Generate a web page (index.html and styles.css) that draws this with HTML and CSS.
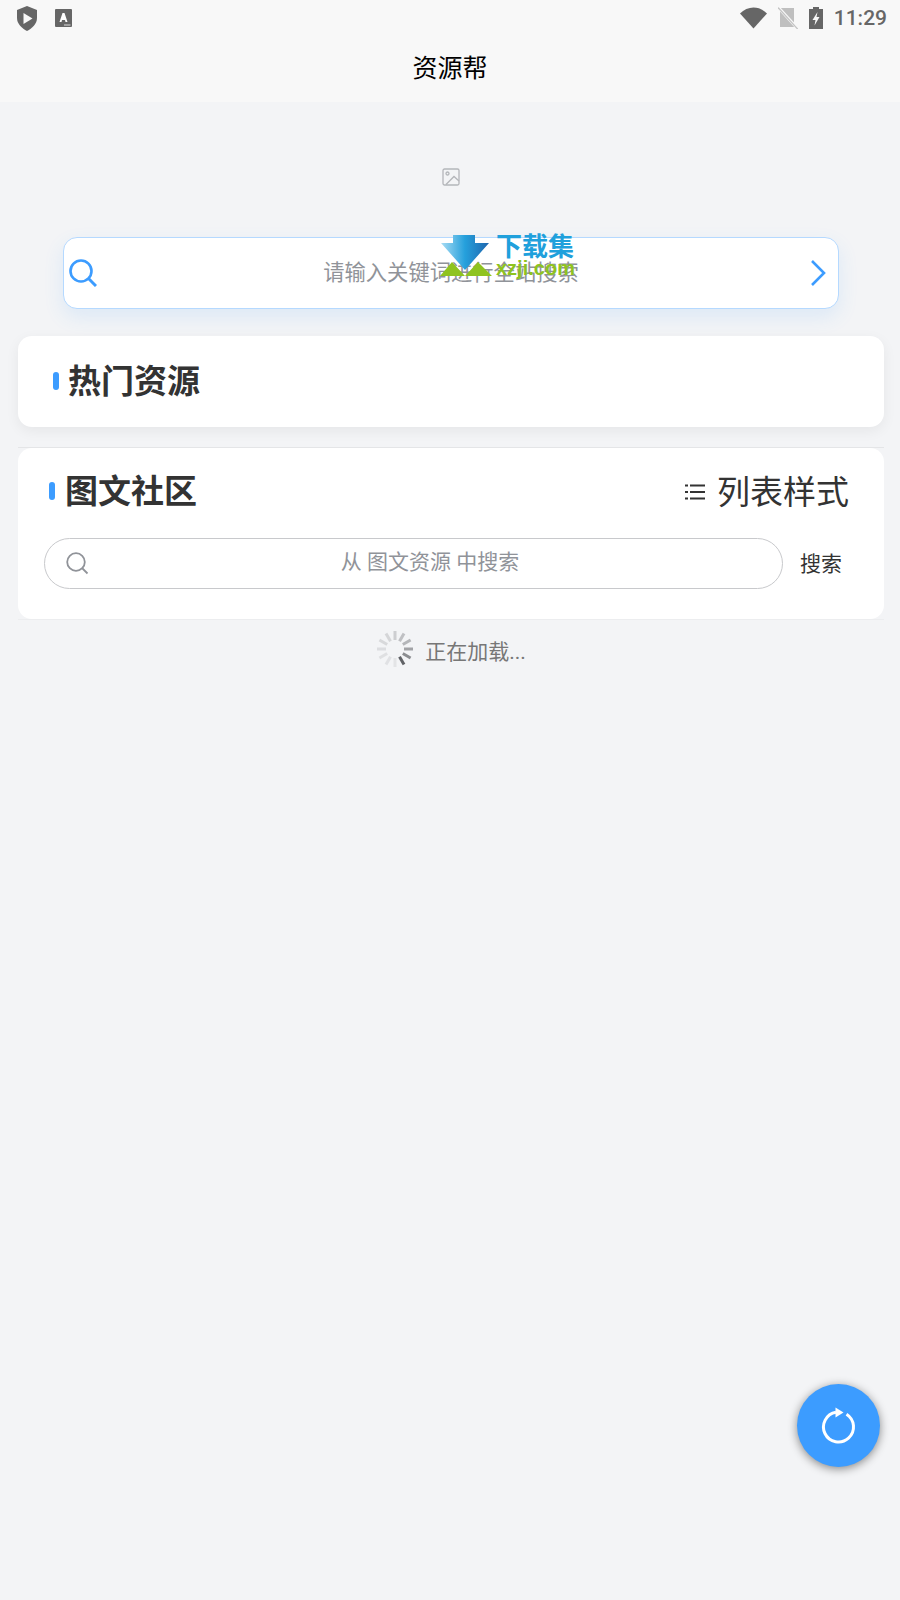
FILE: index.html
```html
<!DOCTYPE html>
<html lang="zh-CN">
  <head>
    <meta charset="UTF-8" />
    <meta name="viewport" content="width=device-width, initial-scale=1.0" />
    <title>资源帮</title>
    <link rel="stylesheet" href="styles.css">
  </head>
  <body>
    <header class="top">
      <div class="status">
        <div class="status-left">
          <svg width="22" height="25" viewBox="0 0 22 25">
            <path d="M11 0 L21 4 V12 C21 18 16 22.500 11 25 C6 22.500 1 18 1 12 V4 Z" fill="#666" />
            <path d="M7.500 7 L16.500 12.500 L7.500 18 Z" fill="#f8f8f8" />
          </svg>
          <svg width="17" height="19" viewBox="0 0 17 19">
            <rect width="17" height="18" rx="1" fill="#666" />
            <path d="M4.500 13 L7.500 4 H9.500 L12.500 13 H10.500 L10 11 H7 L6.500 13 Z" fill="#fff" />
            <path d="M9 15.500 H15.500 V16.500 H9 Z" fill="#ddd" />
          </svg>
        </div>
        <div class="status-right">
          <svg width="27" height="22" viewBox="0 0 27 22">
            <path d="M0 6.500 C7.500 -1.500 19.500 -1.500 27 6.500 L13.500 21.500 Z" fill="#666" />
          </svg>
          <svg width="20" height="22" viewBox="0 0 20 22">
            <path d="M2 1 H16 V20 H2 Z" fill="#bfbfbf" />
            <path d="M0 0 L20 22" stroke="#f8f8f8" stroke-width="3" />
            <path d="M0 0.500 L20 22.500" stroke="#c4c4c4" stroke-width="1.200" />
          </svg>
          <svg width="14" height="22" viewBox="0 0 14 22">
            <path d="M4 0 H10 V2 H14 V22 H0 V2 H4 Z" fill="#666" />
            <path d="M8.500 5 L3.500 13 H6.500 L5.500 18.500 L10.500 10 H7.500 Z" fill="#f8f8f8" />
          </svg>
          <span class="time">11:29</span>
        </div>
      </div>
      <div class="nav-title">资源帮</div>
    </header>

    <main>
      <div class="banner">
        <svg width="18" height="18" viewBox="0 0 18 18" fill="none" stroke="#b4b6ba" stroke-width="1.300">
          <rect x="1" y="1" width="16" height="16" rx="1.500" />
          <circle cx="5.500" cy="5.500" r="1.500" />
          <path d="M4 16.500 L12 8.500 L17 13" />
        </svg>
      </div>

      <div class="site-search">
        <svg width="28" height="28" viewBox="0 0 28 28" fill="none" stroke="#3c9cff" stroke-width="2.600">
          <circle cx="12" cy="12" r="10.500" />
          <path d="M19.500 19.500 L27 27" stroke-width="3" />
        </svg>
        <span class="site-search-text">请输入关键词进行全站搜索</span>
        <svg width="16" height="28" viewBox="0 0 16 28" fill="none" stroke="#3c9cff" stroke-width="2.600">
          <path d="M2 2 L14 14 L2 26" />
        </svg>
      </div>

      <section class="card card-hot">
        <h2 class="card-title">热门资源</h2>
      </section>

      <section class="posts-wrap">
        <div class="card card-posts">
          <div class="posts-head">
            <h2 class="card-title">图文社区</h2>
            <div class="list-style">
              <svg width="20" height="16" viewBox="0 0 20 16" fill="#333">
                <rect x="0" y="0.500" width="3" height="2" />
                <rect x="5" y="0.500" width="15" height="2" />
                <rect x="0" y="7" width="3" height="2" />
                <rect x="5" y="7" width="15" height="2" />
                <rect x="0" y="13.500" width="3" height="2" />
                <rect x="5" y="13.500" width="15" height="2" />
              </svg>
              <span>列表样式</span>
            </div>
          </div>
          <div class="posts-search">
            <div class="search-input">
              <svg width="23" height="23" viewBox="0 0 23 23" fill="none" stroke="#909399" stroke-width="1.800">
                <circle cx="10" cy="10" r="8.800" />
                <path d="M16 16 L21.500 21.500" />
              </svg>
              <span class="search-hint">从 图文资源 中搜索</span>
            </div>
            <span class="search-btn">搜索</span>
          </div>
        </div>
      </section>

      <div class="loading">
        <svg width="38" height="38" viewBox="-19 -19 38 38" stroke="#606266" stroke-width="3">
          <line y1="-18" y2="-9" transform="rotate(0)" opacity="0.250" />
          <line y1="-18" y2="-9" transform="rotate(30)" opacity="0.350" />
          <line y1="-18" y2="-9" transform="rotate(60)" opacity="0.420" />
          <line y1="-18" y2="-9" transform="rotate(90)" opacity="0.550" />
          <line y1="-18" y2="-9" transform="rotate(120)" opacity="0.700" />
          <line y1="-18" y2="-9" transform="rotate(150)" opacity="1" />
          <line y1="-18" y2="-9" transform="rotate(180)" opacity="0.100" />
          <line y1="-18" y2="-9" transform="rotate(210)" opacity="0.120" />
          <line y1="-18" y2="-9" transform="rotate(240)" opacity="0.130" />
          <line y1="-18" y2="-9" transform="rotate(270)" opacity="0.150" />
          <line y1="-18" y2="-9" transform="rotate(300)" opacity="0.180" />
          <line y1="-18" y2="-9" transform="rotate(330)" opacity="0.200" />
        </svg>
        <span class="loading-text">正在加载...</span>
      </div>
    </main>

    <!-- watermark over the search box -->
    <div class="watermark">
      <svg width="54" height="44" viewBox="0 0 54 44">
        <defs>
          <linearGradient id="arrowFill" x1="0" y1="0" x2="1" y2="0">
            <stop offset="0" stop-color="#a8dcf4" />
            <stop offset="0.500" stop-color="#25a0dc" />
            <stop offset="1" stop-color="#1f66ae" />
          </linearGradient>
        </defs>
        <path d="M13 0 H35 V8 H49 L25 35 L1 8 H13 Z" fill="url(#arrowFill)" />
        <path d="M0 41 L12 27 L25 41 Z M25 41 L38 27 L52 41 Z" fill="#8fc31f" />
      </svg>
      <div class="watermark-text">
        <div class="watermark-cn">下载集</div>
        <div class="watermark-en">xzji.com</div>
      </div>
    </div>

    <button class="fab" type="button">
      <svg width="38" height="40" viewBox="0 0 38 40" fill="none" stroke="#fff" stroke-width="3">
        <path d="M26.500 8.300 A15 15 0 1 1 16 6.200" />
        <path d="M15.500 1.500 L23.500 6.500 L15.500 11.500 Z" fill="#fff" stroke="none" />
      </svg>
    </button>
  </body>
</html>
```

FILE: styles.css
```css
body {
  font-family: Roboto, "Noto Sans CJK SC", sans-serif;
  background-color: #f3f4f6;
  margin: 0;
  padding: 0;
  height: 1600px;
  overflow: hidden;
}

.top {
  background-color: #f8f8f8;
  height: 102px;
}

.status {
  height: 36px;
  display: flex;
  justify-content: space-between;
  align-items: center;
  padding: 0 13px 0 16px;
}

.status-left {
  display: flex;
  align-items: center;
  gap: 17px;
}

.status-right {
  display: flex;
  align-items: center;
  gap: 11px;
}

.time {
  color: #666;
  font-size: 21px;
  font-weight: 500;
}

.nav-title {
  text-align: center;
  font-size: 25px;
  line-height: 30px;
  color: #000;
  margin-top: 18px;
}

.banner {
  height: 135px;
  display: flex;
  justify-content: center;
  align-items: center;
  padding-left: 2px;
  padding-top: 14px;
  box-sizing: border-box;
}

.site-search {
  display: flex;
  align-items: center;
  justify-content: space-between;
  height: 72px;
  margin: 0 61px 0 63px;
  padding: 0 12px 0 5px;
  box-sizing: border-box;
  background-color: #fff;
  border: 1px solid #b5d9ff;
  border-radius: 14px;
  box-shadow: 0 8px 20px rgba(60, 156, 255, 0.12);
}

.site-search-text {
  font-size: 21.300px;
  color: #909399;
  margin: -5px 5px 0 0;
}

.card {
  background-color: #fff;
  border-radius: 14px;
}

.card-hot {
  margin: 27px 16px 0 18px;
  height: 91px;
  padding: 0 35px;
  display: flex;
  align-items: center;
  box-shadow: 0 4px 14px rgba(0, 0, 0, 0.06);
}

/* the lines run straight past the rounded corners of the card */
.posts-wrap {
  margin: 20px 16px 0 18px;
  border-top: 1px solid #e4e5e7;
  border-bottom: 1px solid #ecedef;
}

.card-posts {
  height: 171px;
  padding: 0 35px 0 26px;
  box-sizing: border-box;
}

.card-title {
  margin: 0;
  font-size: 33px;
  font-weight: 700;
  color: #333;
  line-height: 40px;
  display: flex;
  align-items: center;
  gap: 9px;
}

.card-title::before {
  content: "";
  width: 6px;
  height: 18px;
  border-radius: 3px;
  background-color: #3c9cff;
  margin-bottom: 2px;
}

.card-posts .card-title {
  margin-left: 5px;
  gap: 10px;
}

.posts-head {
  display: flex;
  justify-content: space-between;
  align-items: center;
  height: 88px;
}

.list-style {
  display: flex;
  align-items: center;
  gap: 12px;
  font-size: 33px;
  color: #333;
}

.list-style span {
  margin-bottom: 4px;
}

.posts-search {
  display: flex;
  align-items: center;
  margin: 2px 6px 0 0;
}

.search-input {
  position: relative;
  flex: 1;
  height: 51px;
  box-sizing: border-box;
  border: 1px solid #c8c9cc;
  border-radius: 26px;
  display: flex;
  align-items: center;
  justify-content: center;
}

.search-input svg {
  position: absolute;
  left: 21px;
  top: 13px;
}

.search-hint {
  font-size: 21px;
  color: #909399;
  margin: -8px 0 0 33px;
}

.search-btn {
  font-size: 21px;
  color: #333;
  margin: 0 0 3px 17px;
  width: 43px;
  white-space: nowrap;
}

.loading {
  display: flex;
  justify-content: center;
  align-items: center;
  gap: 11px;
  margin-top: 10px;
  font-size: 21px;
  color: #777;
  padding-left: 2px;
}

.loading svg {
  margin-bottom: -2px;
}

.loading-text {
  margin-top: 4px;
}

.watermark {
  position: absolute;
  left: 440px;
  top: 235px;
  display: flex;
  gap: 2px;
}

.watermark-text {
  width: 84px;
}

.watermark-cn {
  font-size: 26px;
  line-height: 24px;
  font-weight: 700;
  color: #1fa0dc;
}

.watermark-en {
  font-family: "Liberation Sans", sans-serif;
  font-size: 20px;
  line-height: 19px;
  font-weight: 700;
  color: #8fc31f;
}

.fab {
  position: absolute;
  left: 797px;
  top: 1384px;
  width: 83px;
  height: 83px;
  padding: 0;
  border: none;
  border-radius: 50%;
  background-color: #3c9cff;
  box-shadow: 0 2px 10px rgba(0, 0, 0, 0.45);
  display: flex;
  align-items: center;
  justify-content: center;
}
```
